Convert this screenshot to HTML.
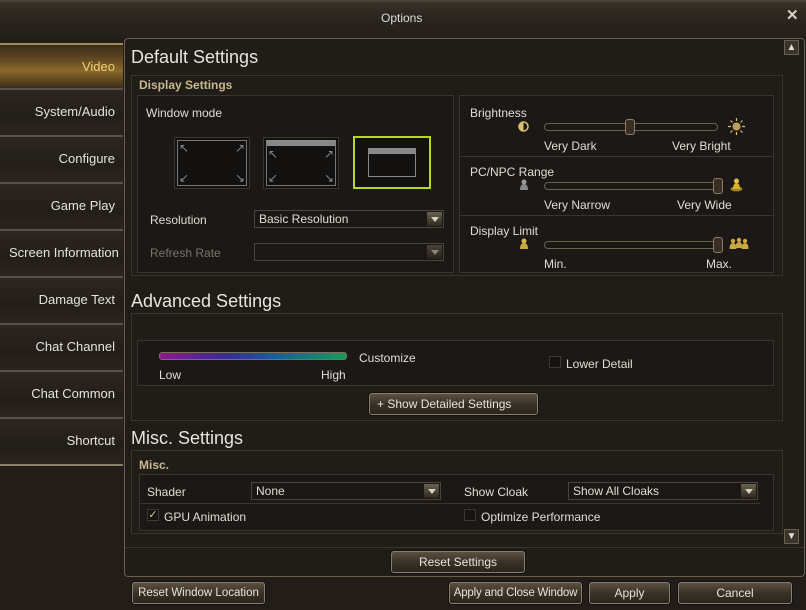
<!DOCTYPE html>
<html><head><meta charset="utf-8"><style>
*{margin:0;padding:0;box-sizing:border-box}
html,body{width:806px;height:610px;overflow:hidden}
body{background:#221d18;font-family:"Liberation Sans",sans-serif;color:#e0dcd4;font-size:12px;position:relative}
.a{position:absolute}
.t{position:absolute;white-space:nowrap}
.tab{position:absolute;left:0;width:123px;height:47px;border-bottom:2px solid #5a5045;background:linear-gradient(#2c2620,#231e19 60%,#2a241e);text-align:right;padding-right:8px;line-height:44px;font-size:13px;color:#e6e2da;white-space:nowrap}
.box{position:absolute;border:1px solid #3a342c;background:#1b1815}
.h1{position:absolute;font-size:18px;color:#e8e4dc;white-space:nowrap}
.btn{position:absolute;height:22px;border:1px solid #8a7e6a;border-radius:3px;background:linear-gradient(#5a5040,#3a3228 50%,#2a241c);text-align:center;line-height:20px;font-size:12px;color:#e6e2da;box-shadow:0 0 0 1px #111;white-space:nowrap;overflow:hidden}
.dd{position:absolute;height:18px;border:1px solid #4a443c;background:#1a1714;line-height:16px;padding-left:4px;font-size:12px;white-space:nowrap}
.dd i{position:absolute;right:1px;top:1px;width:15px;height:14px;background:linear-gradient(#6a604e,#2e2820);}
.dd i:after{content:"";position:absolute;left:4px;top:5px;border:4px solid transparent;border-top:5px solid #d8d0c0;border-bottom:0}
.sl{position:absolute;height:8px;border:1px solid #6a6050;border-radius:4px;background:#1a1714}
.kn{position:absolute;width:10px;height:16px;border:1px solid #8a7e6a;border-radius:3px;background:#3a2e24}
.cb{position:absolute;width:12px;height:12px;border:1px solid #3e3830;background:#161310}
.lbl{color:#c8b890;font-weight:bold;font-size:12px}
.ar{position:absolute;color:#888;font-size:12px;font-family:"DejaVu Sans",sans-serif;line-height:12px}
</style></head><body>
<div class="a" style="left:0;top:0;width:806px;height:38px;background:linear-gradient(#3a332b,#2c261f 40%,#241f1a)"></div>
<div class="a" style="left:0;top:0;width:806px;height:2px;background:#4a4136"></div>
<div class="t" style="left:381px;top:11px;font-size:12px;color:#ddd">Options</div>
<div class="t" style="left:786px;top:6px;font-size:15px;font-weight:bold;color:#d8d0c0">✕</div>

<div class="tab" style="top:43px;background:linear-gradient(#3a2c18,#6a5024 40%,#8a6a2c 60%,#3a2c18);color:#f0d070;border-top:2px solid #a08a5a">Video</div>
<div class="tab" style="top:90px">System/Audio</div>
<div class="tab" style="top:137px">Configure</div>
<div class="tab" style="top:184px">Game Play</div>
<div class="tab" style="top:231px;overflow:hidden;text-align:left;padding-left:9px">Screen Information</div>
<div class="tab" style="top:278px">Damage Text</div>
<div class="tab" style="top:325px">Chat Channel</div>
<div class="tab" style="top:372px">Chat Common</div>
<div class="tab" style="top:419px;border-bottom-color:#8a7e6a">Shortcut</div>

<div class="a" style="left:124px;top:38px;width:681px;height:539px;border:1px solid #6a6050;border-radius:4px;background:#201c17"></div>
<div class="a" style="left:784px;top:40px;width:15px;height:15px;border:1px solid #6a6050;background:#3a342c;color:#ddd;font-size:10px;text-align:center;line-height:13px">▲</div>
<div class="a" style="left:784px;top:529px;width:15px;height:15px;border:1px solid #6a6050;background:#3a342c;color:#ddd;font-size:10px;text-align:center;line-height:13px">▼</div>

<div class="h1" style="left:131px;top:47px">Default Settings</div>
<div class="box" style="left:131px;top:75px;width:652px;height:201px;background:#201c17"></div>
<div class="t lbl" style="left:139px;top:78px">Display Settings</div>
<div class="box" style="left:137px;top:95px;width:317px;height:178px"></div>
<div class="t" style="left:146px;top:106px">Window mode</div>
<div class="a" style="left:174px;top:137px;width:76px;height:52px;border:1px solid #3a3630;background:#121110"><div class="a" style="left:2px;top:2px;right:2px;bottom:2px;border:1px solid #777"></div>
<span class="ar" style="left:4px;top:4px">↖</span><span class="ar" style="right:4px;top:4px">↗</span><span class="ar" style="left:4px;bottom:4px">↙</span><span class="ar" style="right:4px;bottom:4px">↘</span></div>
<div class="a" style="left:263px;top:137px;width:76px;height:52px;border:1px solid #3a3630;background:#121110"><div class="a" style="left:2px;top:2px;right:2px;bottom:2px;border:1px solid #777;border-top:6px solid #888"></div>
<span class="ar" style="left:4px;top:10px">↖</span><span class="ar" style="right:4px;top:10px">↗</span><span class="ar" style="left:4px;bottom:4px">↙</span><span class="ar" style="right:4px;bottom:4px">↘</span></div>
<div class="a" style="left:353px;top:136px;width:78px;height:53px;border:2px solid #b8d820;background:#121110"><div class="a" style="left:13px;top:10px;width:48px;height:29px;border:1px solid #888;border-top:6px solid #888"></div></div>
<div class="t" style="left:150px;top:213px">Resolution</div>
<div class="dd" style="left:254px;top:210px;width:190px">Basic Resolution<i></i></div>
<div class="t" style="left:150px;top:246px;color:#7a746c">Refresh Rate</div>
<div class="dd" style="left:254px;top:243px;width:190px"><i style="opacity:.6"></i></div>

<div class="box" style="left:459px;top:95px;width:315px;height:178px"></div>
<div class="a" style="left:460px;top:156px;width:313px;height:1px;background:#3a342c"></div>
<div class="a" style="left:460px;top:215px;width:313px;height:1px;background:#3a342c"></div>
<div class="t" style="left:470px;top:106px">Brightness</div>
<svg class="a" style="left:518px;top:121px" width="11" height="11"><circle cx="5.5" cy="5.5" r="4.5" fill="#1a1714" stroke="#d8c070" stroke-width="1.5"/><path d="M5.5 1 A4.5 4.5 0 0 0 5.5 10 Z" fill="#d8c070"/></svg>
<div class="sl" style="left:544px;top:123px;width:174px"></div>
<div class="kn" style="left:625px;top:119px"></div>
<svg class="a" style="left:728px;top:118px" width="17" height="17"><circle cx="8.5" cy="8.5" r="4" fill="#b8a060"/><g stroke="#d8c070" stroke-width="1.2"><path d="M8.5 0v3M8.5 14v3M0 8.5h3M14 8.5h3M2.5 2.5l2 2M12.5 12.5l2 2M2.5 14.5l2-2M12.5 4.5l2-2"/></g></svg>
<div class="t" style="left:544px;top:139px">Very Dark</div>
<div class="t" style="left:672px;top:139px">Very Bright</div>
<div class="t" style="left:470px;top:165px">PC/NPC Range</div>
<svg class="a" style="left:519px;top:179px" width="10" height="12"><circle cx="5" cy="3" r="2.5" fill="#999"/><path d="M1 11 Q1 5 5 5 Q9 5 9 11Z" fill="#888"/></svg>
<div class="sl" style="left:544px;top:182px;width:178px"></div>
<div class="kn" style="left:713px;top:178px"></div>
<svg class="a" style="left:730px;top:178px" width="13" height="14"><ellipse cx="6.5" cy="11" rx="6" ry="2.5" fill="#a08020"/><circle cx="6.5" cy="3" r="2.5" fill="#e8c040"/><path d="M3 11 Q3 5 6.5 5 Q10 5 10 11Z" fill="#d8b030"/></svg>
<div class="t" style="left:544px;top:198px">Very Narrow</div>
<div class="t" style="left:677px;top:198px">Very Wide</div>
<div class="t" style="left:470px;top:224px">Display Limit</div>
<svg class="a" style="left:519px;top:238px" width="10" height="12"><circle cx="5" cy="3" r="2.5" fill="#d8b850"/><path d="M1 11 Q1 5 5 5 Q9 5 9 11Z" fill="#c8a840"/></svg>
<div class="sl" style="left:544px;top:241px;width:178px"></div>
<div class="kn" style="left:713px;top:237px"></div>
<svg class="a" style="left:729px;top:237px" width="20" height="14"><g fill="#c8a840"><circle cx="4" cy="4" r="2.2"/><path d="M0.5 12 Q0.5 6 4 6 Q7.5 6 7.5 12Z"/><circle cx="10" cy="3" r="2.2"/><path d="M6.5 11 Q6.5 5 10 5 Q13.5 5 13.5 11Z"/><circle cx="16" cy="4" r="2.2"/><path d="M12.5 12 Q12.5 6 16 6 Q19.5 6 19.5 12Z"/></g></svg>
<div class="t" style="left:544px;top:257px">Min.</div>
<div class="t" style="left:706px;top:257px">Max.</div>

<div class="h1" style="left:131px;top:291px">Advanced Settings</div>
<div class="box" style="left:131px;top:313px;width:652px;height:108px;background:#201c17"></div>
<div class="box" style="left:137px;top:340px;width:637px;height:46px"></div>
<div class="a" style="left:159px;top:352px;width:188px;height:8px;border:1px solid #7a7060;border-radius:3px;background:linear-gradient(90deg,#8a1a8a,#3a2a9a 35%,#1a5a9a 60%,#1a9a5a)"></div>
<div class="t" style="left:359px;top:351px">Customize</div>
<div class="t" style="left:159px;top:368px">Low</div>
<div class="t" style="left:321px;top:368px">High</div>
<div class="cb" style="left:549px;top:356px"></div>
<div class="t" style="left:566px;top:357px">Lower Detail</div>
<div class="btn" style="left:369px;top:393px;width:169px;text-align:left;padding-left:7px">+ Show Detailed Settings</div>

<div class="h1" style="left:131px;top:428px">Misc. Settings</div>
<div class="box" style="left:131px;top:450px;width:652px;height:84px;background:#201c17"></div>
<div class="t lbl" style="left:139px;top:458px">Misc.</div>
<div class="box" style="left:139px;top:474px;width:635px;height:57px"></div>
<div class="a" style="left:140px;top:503px;width:620px;height:1px;background:#3a342c"></div>
<div class="t" style="left:147px;top:485px">Shader</div>
<div class="dd" style="left:251px;top:482px;width:190px">None<i></i></div>
<div class="t" style="left:464px;top:485px">Show Cloak</div>
<div class="dd" style="left:568px;top:482px;width:190px">Show All Cloaks<i></i></div>
<div class="cb" style="left:147px;top:509px;color:#d8c890;font-size:11px;line-height:10px;text-align:center">✓</div>
<div class="t" style="left:164px;top:510px">GPU Animation</div>
<div class="cb" style="left:464px;top:509px"></div>
<div class="t" style="left:481px;top:510px">Optimize Performance</div>

<div class="a" style="left:125px;top:547px;width:679px;height:1px;background:#3a342c"></div>
<div class="btn" style="left:391px;top:551px;width:134px">Reset Settings</div>
<div class="btn" style="left:132px;top:582px;width:133px;font-size:11.5px">Reset Window Location</div>
<div class="btn" style="left:449px;top:582px;width:133px;font-size:11.5px;letter-spacing:-0.2px">Apply and Close Window</div>
<div class="btn" style="left:589px;top:582px;width:81px">Apply</div>
<div class="btn" style="left:678px;top:582px;width:114px">Cancel</div>
</body></html>
